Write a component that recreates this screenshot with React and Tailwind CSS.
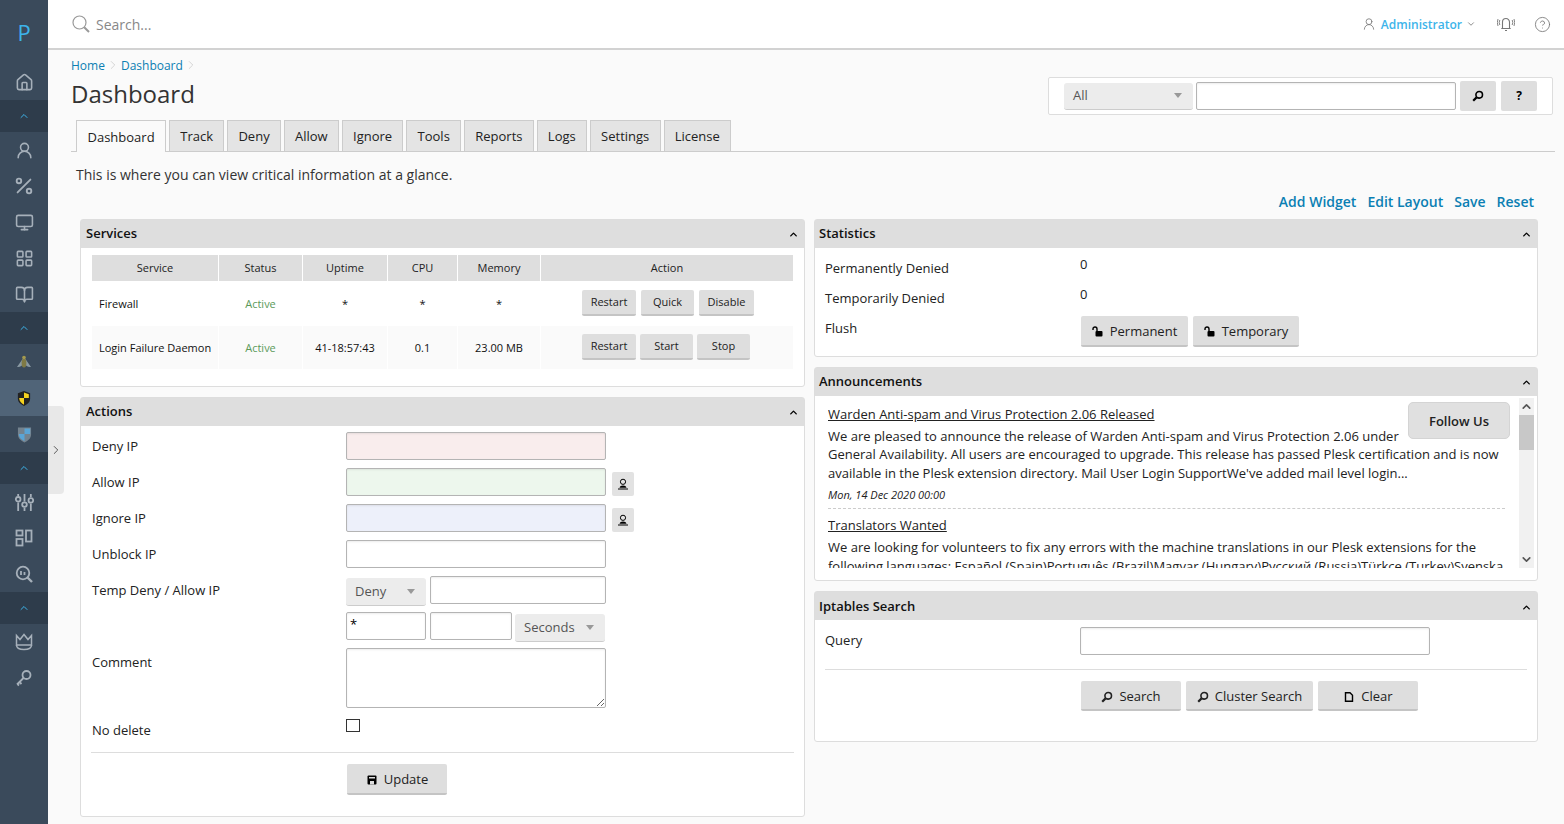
import { House, UserRound, Percent, Monitor, LayoutGrid, BookOpen, ChevronUp, ChevronDown, ChevronRight, CircleHelp } from "lucide-react"

const font = { fontFamily: '"Open Sans", sans-serif' }

const SearchGlyph = ({ className = "w-3 h-3" }) => (
  <svg viewBox="0 0 12 12" className={className} fill="none" stroke="currentColor">
    <circle cx="7.2" cy="4.8" r="3.3" strokeWidth="1.6" />
    <path d="M4.6 7.4 1.2 10.8" strokeWidth="2.2" />
  </svg>
)

const TopSearch = () => (
  <svg viewBox="0 0 18 18" className="h-[18px] w-[18px]" fill="none" stroke="#999">
    <circle cx="7.5" cy="7.5" r="6.5" strokeWidth="1.2" />
    <path d="M12.2 12.2 17 17" strokeWidth="2" />
  </svg>
)

const BellWaves = () => (
  <svg viewBox="0 0 18 16" className="h-[16px] w-[18px]" fill="none" stroke="#777" strokeWidth="1.1">
    <path d="M5.500 12.500V6a3.500 3.500 0 0 1 7 0v6.500zM4.300 12.500h9.400M8 14.500h2" />
    <path d="M2.800 4Q1.600 6.500 2.800 9M1 3Q-.4 6.500 1 10M15.200 4q1.200 2.500 0 5M17 3q1.400 3.500 0 7" strokeWidth=".9" />
  </svg>
)

const UnlockGlyph = () => (
  <svg viewBox="0 0 12 12" className="h-3 w-3">
    <path d="M1 4V3a2 2 0 0 1 4 0v2" fill="none" stroke="black" strokeWidth="1.4" />
    <rect x="3.500" y="5" width="7" height="5.500" rx="1" fill="black" />
  </svg>
)

const UserGlyph = () => (
  <svg viewBox="0 0 12 12" className="h-3 w-3">
    <circle cx="6" cy="3.800" r="2.600" fill="none" stroke="black" strokeWidth="1" />
    <path d="M2.500 9.800c.5-1.500 1.500-2.200 3.500-2.200s3 .7 3.500 2.200z" fill="black" />
    <path d="M1 11h10" stroke="black" />
  </svg>
)

const SaveGlyph = () => (
  <svg viewBox="0 0 12 12" className="h-3 w-3">
    <rect x="1.500" y="1.500" width="9" height="9" rx="1" fill="black" />
    <path d="M3 3h6v1.500H3zM4 7h4v3.500H4z" fill="#ddd" />
  </svg>
)

const FileGlyph = () => (
  <svg viewBox="0 0 12 12" className="h-3 w-3" fill="none" stroke="black" strokeWidth="1.4">
    <path d="M2.500 1.700h4.500l2.500 2.500v6h-7z" />
  </svg>
)

const Bee = () => (
  <svg viewBox="0 0 20 20" className="h-5 w-5">
    <path d="M10 5 3 15c3 .5 5-1 7-4 2 3 4 4.500 7 4z" fill="#8a9aa3" />
    <ellipse cx="10" cy="11" rx="2.400" ry="4.500" fill="#7f7a45" />
    <circle cx="10" cy="5.500" r="1.800" fill="#a49a4e" />
  </svg>
)

const ShieldColor = () => (
  <svg viewBox="0 0 16 18" className="h-[17px] w-[14px]">
    <path d="M8 .5 15 3v6c0 4-3 6.500-7 8.500C4 15.500 1 13 1 9V3z" fill="#222" />
    <path d="M8 2.200 13.500 4v4.500H8zM8 8.500V16C5 14.500 2.500 12.500 2.500 8.500z" fill="#f5d21f" />
  </svg>
)

const ShieldBlue = () => (
  <svg viewBox="0 0 16 18" className="h-[17px] w-[15px]">
    <path d="M1 1.500h14V9c0 4-3 6.500-7 8.500C4 15.500 1 13 1 9z" fill="#74838f" />
    <path d="M8 2.500h6v6H8zM8 8.500v7.500C5 14.500 2 12.500 2 8.500z" fill="#5aa5d6" />
  </svg>
)

const Sliders = () => (
  <svg viewBox="0 0 18 18" className="h-[19px] w-[19px]" fill="none" stroke="#a6b0ba" strokeWidth="1.700">
    <path d="M3 1v2M3 9v8M9 1v7M9 14v3M15 1v3M15 10v7" />
    <circle cx="3" cy="6" r="2.200" />
    <circle cx="9" cy="11" r="2.200" />
    <circle cx="15" cy="7" r="2.200" />
  </svg>
)

const Widgets = () => (
  <svg viewBox="0 0 18 18" className="h-[18px] w-[18px]" fill="none" stroke="#a6b0ba" strokeWidth="1.800">
    <rect x="1.500" y="1.500" width="6" height="5" />
    <rect x="1.500" y="10" width="6" height="6.500" />
    <rect x="11" y="1.500" width="5.500" height="11" />
  </svg>
)

const ScanSearch = () => (
  <svg viewBox="0 0 18 18" className="h-[18px] w-[18px]" fill="none" stroke="#a6b0ba" strokeWidth="1.800">
    <circle cx="8" cy="8" r="6.300" />
    <path d="M12.500 12.500 17 17" strokeWidth="2.400" />
    <path d="M6 6v4M9.500 7v3" />
  </svg>
)

const CrownIcon = () => (
  <svg viewBox="0 0 18 18" className="h-[18px] w-[18px]" fill="none" stroke="#a6b0ba" strokeWidth="1.500">
    <path d="M1.500 2.500 5 6.500 9 1.500l4 5 3.500-4V12h-15z" />
    <path d="M1.500 12c0 3 3 4.500 7.500 4.500s7.500-1.500 7.500-4.500" />
  </svg>
)

const KeyIcon = () => (
  <svg viewBox="0 0 18 18" className="h-[18px] w-[18px]" fill="none" stroke="#a6b0ba" strokeWidth="1.800">
    <circle cx="11.500" cy="6" r="4" />
    <path d="M8.500 9 2 15.500M4.500 13l2 2M2.500 15l1.500 1.500" />
  </svg>
)

function NavIcon({ children, active }) {
  return (
    <div className={`flex h-9 items-center justify-center ${active ? "bg-[#506478]" : ""}`}>{children}</div>
  )
}

function Band() {
  return (
    <div className="flex h-8 items-center justify-center bg-[#2e3c4b]">
      <ChevronUp className="h-3 w-3 text-[#3db4ea]" />
    </div>
  )
}

const navIcon = "h-[19px] w-[19px] text-[#a6b0ba]"

function Sidebar() {
  return (
    <aside className="flex w-12 shrink-0 flex-col bg-[#3a4a5b]">
      <div className="flex h-16 items-center justify-center text-[22px] text-[#3db4ea]">P</div>
      <NavIcon><House className={navIcon} /></NavIcon>
      <Band />
      <NavIcon><UserRound className={navIcon} /></NavIcon>
      <NavIcon><Percent className="h-[22px] w-[22px] text-[#a6b0ba]" /></NavIcon>
      <NavIcon><Monitor className={navIcon} /></NavIcon>
      <NavIcon><LayoutGrid className={navIcon} /></NavIcon>
      <NavIcon><BookOpen className={navIcon} /></NavIcon>
      <Band />
      <NavIcon><Bee /></NavIcon>
      <NavIcon active><ShieldColor /></NavIcon>
      <NavIcon><ShieldBlue /></NavIcon>
      <Band />
      <NavIcon><Sliders /></NavIcon>
      <NavIcon><Widgets /></NavIcon>
      <NavIcon><ScanSearch /></NavIcon>
      <Band />
      <NavIcon><CrownIcon /></NavIcon>
      <NavIcon><KeyIcon /></NavIcon>
    </aside>
  )
}

function TopBar() {
  return (
    <header className="flex h-[50px] shrink-0 items-center border-b-2 border-[#d2d2d2] bg-white pl-[24px] pr-[13px]">
      <TopSearch />
      <span className="ml-[6px] text-[14px] text-[#888]">Search...</span>
      <div className="ml-auto flex items-center">
        <UserRound className="h-[14px] w-[14px] text-[#777]" strokeWidth={1.4} />
        <span className="ml-[5px] pt-[1px] text-[12px] font-semibold text-[#3db4ea]">Administrator</span>
        <ChevronDown className="ml-[4px] h-[10px] w-[10px] text-[#777]" />
        <span className="ml-[21px]"><BellWaves /></span>
        <CircleHelp className="ml-[19px] h-[17px] w-[17px] text-[#777]" strokeWidth={1.2} />
      </div>
    </header>
  )
}

const tabs = ["Dashboard", "Track", "Deny", "Allow", "Ignore", "Tools", "Reports", "Logs", "Settings", "License"]

function Tabs() {
  return (
    <div className="flex gap-[3px] border-b border-[#ccc] pl-[5px]">
      {tabs.map((t, i) => (
        <div
          key={t}
          className={`flex items-center border border-b-0 border-[#ccc] pt-[2px] text-[13px] text-[#222] ${
            i === 0 ? "mb-[-1px] h-[32px] bg-[#fafafa] px-[10.500px]" : "h-[31px] bg-[#e4e4e4] px-[10.200px]"
          }`}
        >
          {t}
        </div>
      ))}
    </div>
  )
}

function Panel({ title, children, className = "", headClass = "pl-[5px]" }) {
  return (
    <section className={`rounded-[3px] border border-[#ddd] bg-white ${className}`}>
      <div className={`flex h-[28px] items-center justify-between bg-[#dedede] pr-[5px] ${headClass}`}>
        <h2 className="text-[13px] font-semibold text-[#111]">{title}</h2>
        <ChevronUp className="h-[11px] w-[11px] text-black" strokeWidth={3} />
      </div>
      {children}
    </section>
  )
}

function Btn({ children, small, className = "" }) {
  return (
    <button className={`flex items-center justify-center gap-[6px] rounded-[2px] border-b-2 border-[#c4c4c4] bg-[#dedede] text-[#222] ${small ? "h-[26px] pt-[2px] text-[11px]" : "pt-[3px] text-[13px]"} ${className}`}>
      {children}
    </button>
  )
}

const thClass = "flex h-[26px] items-center justify-center bg-[#dedede] text-[11px] text-[#222]"
const tdClass = "flex items-center justify-center pt-[1px] text-[11px] text-[#111]"

function Services() {
  return (
    <Panel title="Services" className="h-[168px]">
      <div className="grid grid-cols-[126px_83px_84px_69px_82px_252px] gap-x-px px-[11px] pt-[7px]">
        {["Service", "Status", "Uptime", "CPU", "Memory", "Action"].map((h) => (
          <div key={h} className={thClass}>{h}</div>
        ))}
        <div className={`${tdClass} h-[45px] !justify-start pl-[7px]`}>Firewall</div>
        <div className={`${tdClass} !text-[#5a9a5a]`}>Active</div>
        <div className={tdClass}>*</div>
        <div className={tdClass}>*</div>
        <div className={tdClass}>*</div>
        <div className="flex items-center gap-[5px] pb-[2px] pl-[41px]">
          <Btn small className="w-[54px]">Restart</Btn>
          <Btn small className="w-[53px]">Quick</Btn>
          <Btn small className="w-[55px]">Disable</Btn>
        </div>
        <div className={`${tdClass} h-[43px] !justify-start bg-[#fafafa] pl-[7px]`}>Login Failure Daemon</div>
        <div className={`${tdClass} bg-[#fafafa] !text-[#5a9a5a]`}>Active</div>
        <div className={`${tdClass} bg-[#fafafa]`}>41-18:57:43</div>
        <div className={`${tdClass} bg-[#fafafa]`}>0.1</div>
        <div className={`${tdClass} bg-[#fafafa]`}>23.00 MB</div>
        <div className="flex items-center gap-[4px] bg-[#fafafa] pb-[2px] pl-[41px]">
          <Btn small className="w-[54px]">Restart</Btn>
          <Btn small className="w-[53px]">Start</Btn>
          <Btn small className="w-[53px]">Stop</Btn>
        </div>
      </div>
    </Panel>
  )
}

const inputClass = "h-7 rounded-[2px] border border-[#b4b4b4] shadow-[inset_0_1px_2px_rgba(0,0,0,0.08)] outline-none text-[13px] px-[3px]"

function Sel({ value, className = "" }) {
  return (
    <div className={`flex items-center justify-between rounded-[3px] border-b border-[#ccc] bg-[#ececec] pl-[9px] pr-[11px] text-[13px] text-[#555] ${className}`}>
      {value}
      <span className="h-0 w-0 border-x-[4px] border-t-[5px] border-x-transparent border-t-[#999]" />
    </div>
  )
}

function FormRow({ label, children }) {
  return (
    <div className="flex items-start">
      <div className="w-[265px] shrink-0 pl-[11px] pt-[5px] text-[13px] text-[#222]">{label}</div>
      {children}
    </div>
  )
}

const iconBtn = "ml-[6px] mt-[4px] flex h-6 w-[22px] items-center justify-center rounded-[2px] bg-[#e2e2e2]"

function Actions() {
  return (
    <Panel title="Actions" className="h-[420px]">
      <div className="flex flex-col gap-2 pt-[6px]">
        <FormRow label="Deny IP"><input className={`${inputClass} w-[260px] bg-[#f9eded]`} /></FormRow>
        <FormRow label="Allow IP">
          <input className={`${inputClass} w-[260px] bg-[#edf7ed]`} />
          <div className={iconBtn}><UserGlyph /></div>
        </FormRow>
        <FormRow label="Ignore IP">
          <input className={`${inputClass} w-[260px] bg-[#edf0fa]`} />
          <div className={iconBtn}><UserGlyph /></div>
        </FormRow>
        <FormRow label="Unblock IP"><input className={`${inputClass} w-[260px] bg-white`} /></FormRow>
        <FormRow label="Temp Deny / Allow IP">
          <Sel value="Deny" className="mb-[-2px] mt-[2px] h-[28px] w-[80px]" />
          <input className={`${inputClass} ml-[4px] w-[176px] bg-white`} />
        </FormRow>
        <FormRow label="">
          <input defaultValue="*" className={`${inputClass} w-[80px] bg-white pb-[4px]`} />
          <input className={`${inputClass} ml-[4px] w-[82px] bg-white`} />
          <Sel value="Seconds" className="mb-[-2px] ml-[3px] mt-[2px] h-[28px] w-[90px]" />
        </FormRow>
        <FormRow label="Comment">
          <textarea className={`${inputClass} !h-[60px] w-[260px] bg-white`} />
        </FormRow>
        <FormRow label="No delete">
          <div className="mt-[3px] h-[13px] w-[14px] border border-[#333] bg-white" />
        </FormRow>
      </div>
      <div className="mx-[10px] mt-[11px] border-t border-[#ddd] pl-[256px] pt-[11px]">
        <Btn className="h-[31px] w-[100px]"><SaveGlyph />Update</Btn>
      </div>
    </Panel>
  )
}

function Statistics() {
  return (
    <Panel title="Statistics" className="h-[138px]" headClass="pl-[4px]">
      <div className="px-[10px] text-[13px] text-[#222]">
        <div className="flex h-[30px] pt-[11px]">
          <span className="w-[255px]">Permanently Denied</span>
          <span className="-mt-1">0</span>
        </div>
        <div className="flex h-[30px] pt-[11px]">
          <span className="w-[255px]">Temporarily Denied</span>
          <span className="-mt-1">0</span>
        </div>
        <div className="flex pt-[8px]">
          <span className="w-[256px] pt-[3px]">Flush</span>
          <div className="flex gap-[5px]">
            <Btn className="h-[31px] w-[107px]"><UnlockGlyph />Permanent</Btn>
            <Btn className="h-[31px] w-[106px]"><UnlockGlyph />Temporary</Btn>
          </div>
        </div>
      </div>
    </Panel>
  )
}

function Announcements() {
  return (
    <Panel title="Announcements" className="h-[214px]" headClass="pl-[4px]">
      <div className="flex h-[172px] pl-[13px] pr-[3px] pt-[2px]">
        <div className="h-[170px] min-w-0 flex-1 overflow-hidden pr-[14px] text-[13px] leading-[18.5px] text-[#222]">
          <div className="float-right ml-[8px] mr-[-5px] mt-[4px] flex h-[37px] w-[102px] items-center justify-center rounded-[5px] border border-[#d4d4d4] bg-[#e0e0e0] pt-[2px] font-semibold">
            Follow Us
          </div>
          <a className="mt-[7px] block underline">Warden Anti-spam and Virus Protection 2.06 Released</a>
          <p className="mt-[3px]">
            We are pleased to announce the release of Warden Anti-spam and Virus Protection 2.06 under General Availability. All users are encouraged to upgrade. This release has passed Plesk certification and is now available in the Plesk extension directory. Mail User Login SupportWe've added mail level login...
          </p>
          <p className="mt-[4px] text-[11px] italic">Mon, 14 Dec 2020 00:00</p>
          <div className="mt-[3px] border-t border-dashed border-[#ccc]" />
          <a className="mt-[7px] block underline">Translators Wanted</a>
          <p className="mt-[4px]">
            We are looking for volunteers to fix any errors with the machine translations in our Plesk extensions for the following languages: Español (Spain)Português (Brazil)Magyar (Hungary)Русский (Russia)Türkçe (Turkey)Svenska
          </p>
        </div>
        <div className="flex w-[15px] shrink-0 flex-col items-center bg-[#f1f1f1]">
          <ChevronUp className="my-[2px] h-[13px] w-[13px] text-[#555]" strokeWidth={3} />
          <div className="h-[35px] w-full bg-[#c8c8c8]" />
          <ChevronDown className="mb-[2px] mt-auto h-[13px] w-[13px] text-[#555]" strokeWidth={3} />
        </div>
      </div>
    </Panel>
  )
}

function IptablesSearch() {
  return (
    <Panel title="Iptables Search" className="h-[151px]" headClass="pl-[4px] pt-[2px]">
      <div className="px-[10px] pt-[7px] text-[13px] text-[#222]">
        <div className="flex">
          <span className="w-[255px] pt-[4px]">Query</span>
          <input className={`${inputClass} w-[350px] bg-white`} />
        </div>
        <div className="mt-[14px] flex gap-[5px] border-t border-[#ddd] pl-[256px] pt-[11px]">
          <Btn className="h-[30px] w-[100px]"><SearchGlyph />Search</Btn>
          <Btn className="h-[30px] w-[127px]"><SearchGlyph />Cluster Search</Btn>
          <Btn className="h-[30px] w-[100px]"><FileGlyph />Clear</Btn>
        </div>
      </div>
    </Panel>
  )
}

function App() {
  return (
    <div className="relative flex h-[824px] w-[1564px] overflow-hidden bg-[#fafafa]" style={font}>
      <Sidebar />
      <div className="absolute left-12 top-[406px] flex h-[88px] w-4 items-center justify-center rounded-r-[4px] bg-[#e8e8e8]">
        <ChevronRight className="h-[14px] w-[14px] text-[#444]" strokeWidth={1.5} />
      </div>
      <div className="flex min-w-0 flex-1 flex-col">
        <TopBar />
        <main className="flex flex-col pl-[23px] pr-[9px]">
          <div className="flex items-start justify-between">
            <div>
              <div className="mt-[5px] flex h-[18px] items-center pt-[4px] text-[12px] text-[#0b7fb3]">
                Home
                <ChevronRight className="mx-[1px] mb-[2px] h-[14px] w-[14px] text-[#bbb]" strokeWidth={1} />
                Dashboard
                <ChevronRight className="mb-[2px] ml-[1px] h-[14px] w-[14px] text-[#bbb]" strokeWidth={1} />
              </div>
              <h1 className="mt-[3px] text-[24px] font-normal leading-[36px] text-[#333]">Dashboard</h1>
            </div>
            <div className="mr-[2px] mt-[27px] flex h-[38px] w-[505px] items-center rounded-[2px] border border-[#ddd] bg-white pl-[15px]">
              <Sel value="All" className="h-[27px] w-[129px]" />
              <input className={`${inputClass} ml-[3px] h-[28px] w-[260px] bg-white`} />
              <div className="ml-[4px] flex h-[30px] w-9 items-center justify-center rounded-[2px] bg-[#dedede]"><SearchGlyph /></div>
              <div className="ml-[5px] flex h-[30px] w-9 items-center justify-center rounded-[2px] bg-[#dedede] text-[12px] font-bold">?</div>
            </div>
          </div>
          <div className="mt-[5px]"><Tabs /></div>
          <p className="mt-[12px] pl-[5px] text-[14px] text-[#333]">This is where you can view critical information at a glance.</p>
          <div className="mt-[6px] flex justify-end gap-[11px] pr-[21px] text-[14px] font-semibold text-[#0b7fb3]">
            <span>Add Widget</span>
            <span>Edit Layout</span>
            <span>Save</span>
            <span>Reset</span>
          </div>
          <div className="mt-[7px] flex gap-[9px] pl-[9px]">
            <div className="flex w-[725px] flex-col gap-[10px]">
              <Services />
              <Actions />
            </div>
            <div className="flex w-[724px] flex-col gap-[10px]">
              <Statistics />
              <Announcements />
              <IptablesSearch />
            </div>
          </div>
        </main>
      </div>
    </div>
  )
}

export default App
